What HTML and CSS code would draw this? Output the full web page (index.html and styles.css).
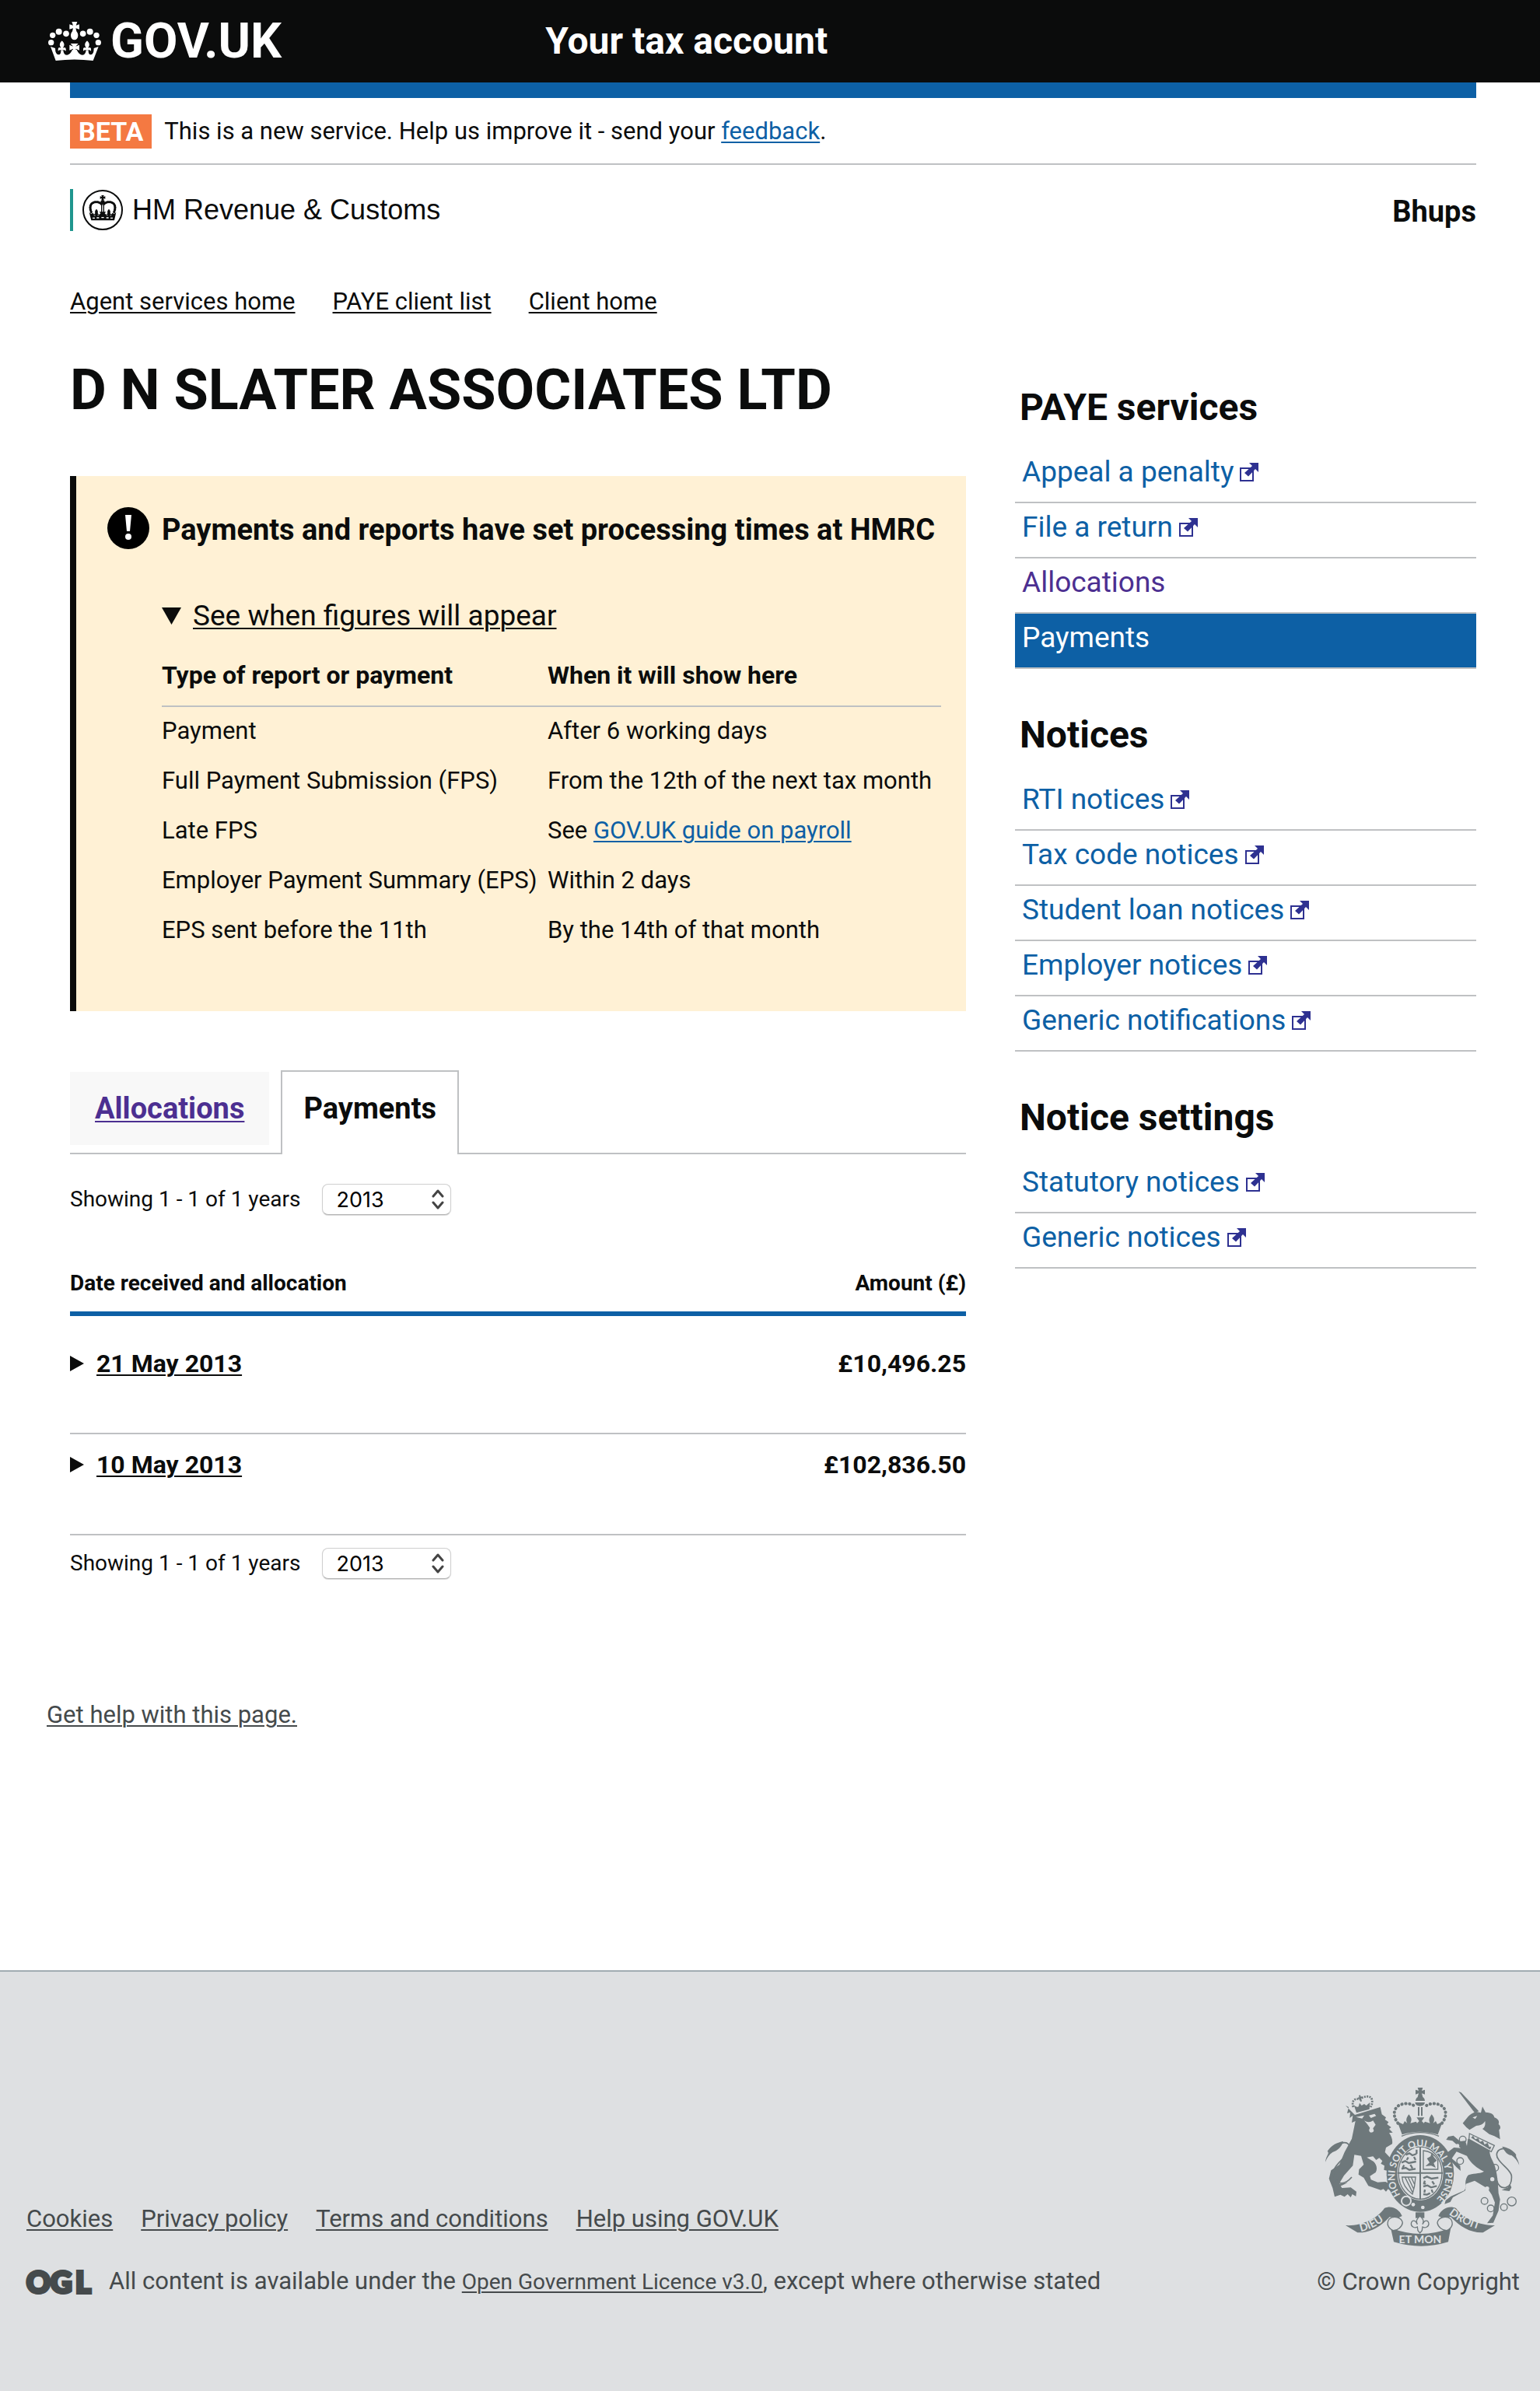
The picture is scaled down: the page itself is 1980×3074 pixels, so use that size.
FILE: index.html
```html
<!DOCTYPE html>
<html lang="en">
<head>
<meta charset="utf-8">
<meta name="viewport" content="width=device-width, initial-scale=1">
<title>D N SLATER ASSOCIATES LTD - Your tax account</title>
<link rel="stylesheet" href="styles.css">
</head>
<body>

<svg class="sprite" aria-hidden="true">
  <symbol id="external" viewBox="0 0 24 24">
    <path d="M1 7h16v16H1z" fill="none" stroke="currentColor" stroke-width="2"/>
    <path d="M12 0h12v12l-4-4-9 9.500-5-4.500L16 4z" fill="currentColor"/>
  </symbol>
  <symbol id="fleur" viewBox="0 0 32 44">
    <path d="M16 0C22 6 26 12 24 19L20 28 26 26Q33 27 31 40Q26 34 16 37Q6 34 1 40Q-1 27 6 26L12 28 8 19C6 12 10 6 16 0z" fill="currentColor"/>
  </symbol>
</svg>

<header class="header">
  <a class="header-logo" href="#">
    <svg class="header-crown" viewBox="33 48 204 150" aria-hidden="true">
      <g fill="currentColor">
        <circle cx="44" cy="128" r="11"/><circle cx="50" cy="100" r="11"/><circle cx="74" cy="86" r="12"/><circle cx="102" cy="94" r="11.500"/>
        <circle cx="226" cy="128" r="11"/><circle cx="219" cy="100" r="11"/><circle cx="194" cy="86" r="12"/><circle cx="167" cy="94" r="11.500"/>
        <path d="M124 48h21l-5 14 13-4v19l-14-4 3 12c4 5 6 9 6 16a14 17 0 0 1-28 0c0-7 2-11 6-16l3-12-14 4V58l14 4z"/>
        <path d="M62 198L42 144 60 150Q60 174 73 175Q83 174 82 158L91 158Q92 176 106 176Q118 174 126 156L143 156Q151 174 163 176Q177 176 179 158L188 158Q187 174 197 175Q209 174 209 150L227 144 206 198Q134 189 62 198z"/>
        <path d="M119 132h30l-10 11 14-6v21l-14-6 2 10h-14l2-10-14 6v-21l14 6z"/>
      </g>
      <use href="#fleur" x="70" y="121" width="32" height="44"/>
      <use href="#fleur" x="167" y="121" width="32" height="44"/>
    </svg>
    <span>GOV.UK</span>
  </a>
  <a class="header-title" href="#">Your tax account</a>
</header>

<div class="container">
  <div class="blue-bar"></div>

  <div class="phase-banner">
    <strong class="phase-tag">BETA</strong>
    <span>This is a new service. Help us improve it - send your <a class="link" href="#">feedback</a>.</span>
  </div>

  <div class="organisation">
    <div class="organisation-logo">
      <svg class="organisation-crest" viewBox="78 39 156 156" aria-hidden="true">
        <circle cx="156" cy="117" r="75" fill="none" stroke="#0b0c0c" stroke-width="6"/>
        <g fill="none" stroke="#0b0c0c" stroke-linecap="round">
          <path d="M112 125c-8-18-4-34 12-38 12-3 22 1 28 8M200 125c8-18 4-34-12-38-12-3-22 1-28 8" stroke-width="9" stroke-dasharray="3 5"/>
          <path d="M113 122c-7-17-3-30 11-34 12-3 22 1 28 9M199 122c7-17 3-30-11-34-12-3-22 1-28 9" stroke-width="4"/>
          <path d="M152 96v34M160 96v34" stroke-width="4"/>
        </g>
        <g fill="#0b0c0c">
          <path d="M151 60h10l-2 6 7-2v10l-7-2 2 6h-10l2-6-7 2V64l7 2z"/>
          <circle cx="156" cy="86" r="8"/>
          <path d="M104 126l8 6 6-4 5 6 4-4c-2-8 0-12 5-17 5 5 7 9 5 17l5 5 6-5-5-6h26l-5 6 6 5 5-5c-2-8 0-12 5-17 5 5 7 9 5 17l4 4 5-6 6 4 8-6-7 31H112z"/>
        </g>
        <path d="M117 148h9m7-1h9m9-1h10m9 1h9m7 1h9" stroke="#fff" stroke-width="4"/>
        <path d="M122 138h6m8-1h6m28 0h6m8 1h6" stroke="#fff" stroke-width="2"/>
      </svg>
      <span>HM Revenue &amp; Customs</span>
    </div>
    <strong class="user-name">Bhups</strong>
  </div>

  <nav class="breadcrumb" aria-label="Breadcrumb">
    <a href="#">Agent services home</a>
    <a href="#">PAYE client list</a>
    <a href="#">Client home</a>
  </nav>

  <div class="columns">
    <main>
      <h1>D N SLATER ASSOCIATES LTD</h1>

      <section class="notice">
        <div class="notice-heading">
          <svg class="notice-icon" viewBox="0 0 54 54" aria-hidden="true">
            <circle cx="27" cy="27" r="27" fill="#000"/>
            <path d="M23 10h8l-2 21h-4z" fill="#fff"/><circle cx="27" cy="38" r="4" fill="#fff"/>
          </svg>
          <h2>Payments and reports have set processing times at HMRC</h2>
        </div>
        <details class="figures" open>
          <summary><span>See when figures will appear</span></summary>
          <table class="figures-table">
            <thead>
              <tr><th scope="col">Type of report or payment</th><th scope="col">When it will show here</th></tr>
            </thead>
            <tbody>
              <tr><td>Payment</td><td>After 6 working days</td></tr>
              <tr><td>Full Payment Submission (FPS)</td><td>From the 12th of the next tax month</td></tr>
              <tr><td>Late FPS</td><td>See <a class="link" href="#">GOV.UK guide on payroll</a></td></tr>
              <tr><td>Employer Payment Summary (EPS)</td><td>Within 2 days</td></tr>
              <tr><td>EPS sent before the 11th</td><td>By the 14th of that month</td></tr>
            </tbody>
          </table>
        </details>
      </section>

      <nav class="tabs" aria-label="Account views">
        <a class="tab" href="#">Allocations</a>
        <a class="tab tab-selected" href="#" aria-current="page">Payments</a>
      </nav>

      <div class="year-filter year-filter-top">
        <label for="year-top">Showing 1 - 1 of 1 years</label>
        <select id="year-top"><option>2013</option></select>
      </div>

      <table class="payments">
        <thead>
          <tr><th scope="col">Date received and allocation</th><th scope="col" class="amount">Amount (£)</th></tr>
        </thead>
        <tbody>
          <tr>
            <td><details><summary><span>21 May 2013</span></summary></details></td>
            <td class="amount">£10,496.25</td>
          </tr>
          <tr>
            <td><details><summary><span>10 May 2013</span></summary></details></td>
            <td class="amount">£102,836.50</td>
          </tr>
        </tbody>
      </table>

      <div class="year-filter">
        <label for="year-bottom">Showing 1 - 1 of 1 years</label>
        <select id="year-bottom"><option>2013</option></select>
      </div>
    </main>

    <aside class="sidebar">
      <section>
        <h2>PAYE services</h2>
        <ul>
          <li><a href="#">Appeal a penalty<svg class="external"><use href="#external"/></svg></a></li>
          <li><a href="#">File a return<svg class="external"><use href="#external"/></svg></a></li>
          <li><a class="visited" href="#">Allocations</a></li>
          <li class="current"><a href="#" aria-current="page">Payments</a></li>
        </ul>
      </section>
      <section>
        <h2>Notices</h2>
        <ul>
          <li><a href="#">RTI notices<svg class="external"><use href="#external"/></svg></a></li>
          <li><a href="#">Tax code notices<svg class="external"><use href="#external"/></svg></a></li>
          <li><a href="#">Student loan notices<svg class="external"><use href="#external"/></svg></a></li>
          <li><a href="#">Employer notices<svg class="external"><use href="#external"/></svg></a></li>
          <li><a href="#">Generic notifications<svg class="external"><use href="#external"/></svg></a></li>
        </ul>
      </section>
      <section>
        <h2>Notice settings</h2>
        <ul>
          <li><a href="#">Statutory notices<svg class="external"><use href="#external"/></svg></a></li>
          <li><a href="#">Generic notices<svg class="external"><use href="#external"/></svg></a></li>
        </ul>
      </section>
    </aside>
  </div>
</div>

<div class="help"><a href="#">Get help with this page.</a></div>

<footer class="footer">
  <div class="footer-main">
    <nav class="footer-links" aria-label="Footer">
      <a href="#">Cookies</a>
      <a href="#">Privacy policy</a>
      <a href="#">Terms and conditions</a>
      <a href="#">Help using GOV.UK</a>
    </nav>
    <div class="licence">
      <svg class="ogl" viewBox="0 0 86 34" aria-hidden="true"><text x="0 31 63" y="31">OGL</text></svg>
      <span>All content is available under the <a href="#">Open Government Licence v3.0</a>, except where otherwise stated</span>
    </div>
  </div>
  <div class="copyright">
    <svg class="arms" viewBox="72 75 750 615" aria-hidden="true">
      <defs>
        <path id="garter-line" d="M362 488A98 114 0 1 1 494 510"/>
        <path id="dieu-line" d="M208 630Q264 620 322 570"/>
        <path id="droit-line" d="M548 562Q606 610 690 628"/>
      </defs>
      <!-- lion -->
      <g fill="#6e787b">
        <path d="M186 180l98-30 6 28 16 12-4 8 14 10-6 8 16 12-8 6 14 14-14 2c10 14 14 26 12 42l-24 14-4 18 28 30c12 18 20 40 22 58l-10 6-10-8-6 12-10-10-8 4 4-20-14-4 2-16-14-8 6-10-12-12-12 8-12-14-24 4 26 16c12 12 16 28 8 42l-22 14 4 14 26 10 30-2 24 12 8 16-12 8-10-8-8 10-10-10-10 4-48-16-18-32-20-12 2-20 18-18-10-34-26-4-6 42-34 38-18 30 10 18 34-2 22 16-2 18-14-8-6 12-12-12-12 10-16-8-22 8-8-34-14-36 8-32 32-22 20-48 28-52 14-68-14 6 4-28-12 10 2-22-12 4 6-24-12-6z"/>
        <path d="M72 362c2-24 18-34 8-42 16-24 38-34 62-38-8 22-22 36-42 42-12 8-22 22-28 38z"/>
        <path d="M88 432l20 10 8-12 10 16 32-4-22 10-30 8-2-12z"/>
      </g>
      <path d="M128 292c30-14 46 6 34 30-14 26-48 44-56 70-6 20 0 40 20 50 18 6 34-6 48-22" fill="none" stroke="#6e787b" stroke-width="5"/>
      <path d="M190 188l24 6 8-12zM240 182l22-6 6 8-20 8zM222 202q18 12 34 0l10 16-10 14q8 16-8 16-12-4-4-18l-10-14z" fill="#dee0e2"/>
      <path d="M192 172l-10-30c6 6 12 10 18 6l4-14 8 10 10-6 8 6 14-12-2 26z" fill="#6e787b"/>
      <path d="M180 150c-8-22 4-36 24-30 20-14 44-16 48 2 2 10 0 20-6 28" fill="none" stroke="#6e787b" stroke-width="8" stroke-dasharray="6 4"/>
      <path d="M204 104l6 24M198 116l18-4" stroke="#6e787b" stroke-width="6"/>
      <!-- unicorn -->
      <g fill="#6e787b">
        <path d="M586 90l10 4 68 72-16 6z"/>
        <path d="M602 212c14-14 22-36 52-44l18 4 6-24 12 22c24 2 32 8 34 20 16 6 20 16 16 26 10 8 8 18 2 22l4 36-22-12-20-8-26-20c10-6 12-18 10-30-8 14-18 16-34 18l-26 16-12-10z"/>
        <path d="M622 272l84 44c-2 24 14 42 20 62 12 40 12 76 14 104l6 24-6 44-20 46-24 2 22-30 8-50-12-30-16-24-50-30-34 12-2 26-48 26-10 18-22 8 4-14 20-16 52-22 6-12c-4-20 0-38 10-48 24-8 50-6 60-14-26-12-52-32-66-60l-40-16-18 26 32 28 2 20-16-14-22-24-12-34 24-18 26 2-32-28-24-4 8-12 20-4 26 22 20-2 6 20z"/>
        <path d="M820 374c-4-24-16-32-12-40-12-20-34-28-54-32 10 20 20 32 36 34 14 10 22 20 30 38z"/>
      </g>
      <path d="M764 310c-34 0-36 26-24 42 14 22 46 40 50 62 2 24-6 42-22 46-18 4-30-8-34-26" fill="none" stroke="#6e787b" stroke-width="5"/>
      <path d="M752 470l24-10 8-14 6 14-8 14z" fill="#6e787b"/>
      <path d="M628 252l96 46-12 24-86-48z" fill="#dee0e2" stroke="#6e787b" stroke-width="4"/>
      <path d="M634 268l8-8 8 14 12-4 6 14 12-4 6 14 12-6 6 16 8-2-4 12z" fill="#6e787b"/>
      <path d="M640 190l18-6-8 12z" fill="#dee0e2"/>
      <g fill="none" stroke="#6e787b" stroke-width="4">
        <circle cx="602" cy="275" r="13"/><circle cx="592" cy="358" r="13"/><circle cx="727" cy="384" r="13"/>
        <circle cx="686" cy="512" r="13"/><circle cx="710" cy="541" r="13"/><circle cx="761" cy="536" r="13"/><circle cx="791" cy="514" r="17"/>
      </g>
      <g fill="#dee0e2"><circle cx="716" cy="428" r="8"/><circle cx="696" cy="464" r="8"/><circle cx="582" cy="299" r="7"/></g>
      <!-- royal crown -->
      <g fill="#6e787b">
        <path d="M428 75h20l-4 12 12-4v18l-12-4 4 14h-20l4-14-12 4V83l12 4z"/>
        <path d="M420 126a18 18 0 0 1 36 0zM418 132h38q-2 14-19 14t-19-14z"/>
        <path d="M350 206l22 10 6-12 10 8c-6-12-4-20 6-34 12 14 12 22 6 34l22-6 4 6 8-8-10-14h30l-10 14 8 8 4-6 20 6c-6-12-4-20 6-34 12 14 12 22 6 34l10-8 6 12 20-10-18 50c-50-14-92-14-138 0z"/>
      </g>
      <path d="M432 150v34M444 150v34" stroke="#6e787b" stroke-width="6"/>
      <path d="M352 212c-22-28-18-62 12-72 22-8 48-2 58 12M522 212c22-28 18-62-12-72-22-8-46-2-56 12" fill="none" stroke="#6e787b" stroke-width="12" stroke-linecap="round" stroke-dasharray="1 14"/>
      <path d="M366 262q72-28 144 0" fill="none" stroke="#6e787b" stroke-width="4"/>
      <!-- garter and shield -->
      <ellipse cx="438" cy="406" rx="130" ry="148" fill="#6e787b"/>
      <ellipse cx="438" cy="404" rx="89" ry="106" fill="#dee0e2"/>
      <ellipse cx="438" cy="404" rx="84" ry="101" fill="none" stroke="#6e787b" stroke-width="4"/>
      <path d="M438 300v208M350 404h176" stroke="#6e787b" stroke-width="6"/>
      <g fill="none" stroke="#6e787b" stroke-width="7">
        <path d="M382 334l14-6 12 8 16-6M392 344l-6 10M414 342l6 12M366 364l14-6 14 8 28-6M376 374l-6 10M400 372l8 14M366 388l16-4 14 8 24-4M424 314v16"/>
        <path d="M450 424l14-6 18 8 26-4M456 434l-4 12M484 436l8 12M450 456l16-4 14 8 22-6M456 468l-2 12M482 468l4 12M450 486l14 2 12-6M450 444l10 2"/>
      </g>
      <path d="M450 318q36 2 56 36v36h-56z" fill="none" stroke="#6e787b" stroke-width="4"/>
      <path d="M458 378l16-14-10-16 14-8 4-14 8 16 12 14-12 10 8 18-18-8z" fill="#6e787b"/>
      <path d="M368 420h52q-2 36-12 66c-18-14-38-34-40-66zM380 422l28 56M392 422l20 42M404 422l12 26" fill="none" stroke="#6e787b" stroke-width="4"/>
      <text class="garter-motto"><textPath href="#garter-line">HONI SOIT QUI MAL Y PENSE</textPath></text>
      <circle cx="384" cy="512" r="18" fill="#6e787b" stroke="#dee0e2" stroke-width="6"/>
      <circle cx="411" cy="526" r="7" fill="#dee0e2"/><circle cx="448" cy="537" r="7" fill="#dee0e2"/>
      <!-- motto scroll -->
      <g fill="#6e787b">
        <path d="M150 606c60 4 120-24 150-66 24-12 56 0 68 30l-20 10-28-6c-36 38-76 62-124 60z"/>
        <path d="M726 606c-60 0-120-24-150-66-24-12-56 0-68 30l20 10 28-6c36 38 76 62 124 60z"/>
        <path d="M324 616q116 46 232 0l-10 54q-104 32-210 0z"/>
        <path d="M420 556h34v22h-34z"/>
      </g>
      <g fill="#dee0e2" stroke="#6e787b" stroke-width="4">
        <path d="M318 582c18-14 48-8 52 14-2 16-20 30-36 30-20-8-28-26-16-44zM556 582c-18-14-48-8-52 14 2 16 20 30 36 30 20-8 28-26 16-44z"/>
        <path d="M437 570c14 12 16 20 10 32 8-18 22-18 24-2 0 12-14 18-24 12l-2 14-8 10-8-10-2-14c-10 6-24 0-24-12 2-16 16-16 24 2-6-12-4-20 10-32z"/>
      </g>
      <g class="scroll-motto">
        <text><textPath href="#dieu-line">DIEU</textPath></text>
        <text x="438" y="675" text-anchor="middle">ET MON</text>
        <text><textPath href="#droit-line">DROIT</textPath></text>
      </g>
    </svg>
    <span>© Crown Copyright</span>
  </div>
</footer>

</body>
</html>
```
FILE: styles.css
```css
* {
  box-sizing: border-box;
}

body {
  margin: 0;
  background: #fff;
  color: #0b0c0c;
  font: 31px/40px Roboto, "Liberation Sans", sans-serif;
}

h1, h2, ul, table {
  margin: 0;
  padding: 0;
}

a {
  color: inherit;
  text-decoration-thickness: 2px;
  text-underline-offset: 3px;
}

.sprite {
  display: block;
  width: 0;
  height: 0;
}

.link {
  color: #0d60a5;
}

/* Header */
.header {
  display: grid;
  grid-template-columns: 1fr 2fr;
  align-items: center;
  height: 106px;
  padding-left: 62px;
  background: #0b0c0c;
  color: #fff;
  font-weight: 700;
}

.header a {
  text-decoration: none;
}

.header-logo {
  display: flex;
  align-items: center;
  gap: 12px;
  font-size: 63px;
}

.header-crown {
  width: 68px;
  height: 50px;
}

.header-title {
  font-size: 48px;
}

.container {
  padding: 0 82px 0 90px;
}

.blue-bar {
  height: 20px;
  background: #0d60a5;
}

.phase-banner {
  display: flex;
  align-items: center;
  gap: 16px;
  padding: 21px 0 19px;
  border-bottom: 2px solid #bfc1c3;
}

.phase-tag {
  padding: 0 11px;
  background: #f47942;
  color: #fff;
  font-size: 34px;
  line-height: 44px;
}

.organisation {
  display: flex;
  justify-content: space-between;
  align-items: flex-end;
  margin-top: 31px;
}

.organisation-logo {
  display: flex;
  align-items: center;
  gap: 12px;
  height: 54px;
  padding-left: 12px;
  border-left: 4px solid #1f968e;
  font-family: "Liberation Sans", Arial, sans-serif;
  font-size: 36px;
}

.organisation-crest {
  width: 52px;
  height: 52px;
}

.user-name {
  font-size: 38px;
  line-height: 50px;
}

.breadcrumb {
  display: flex;
  gap: 48px;
  margin: 71px 0 54px;
}

.columns {
  display: grid;
  grid-template-columns: minmax(0, 1152fr) minmax(0, 593fr);
  gap: 63px;
  align-items: start;
}

h1 {
  margin-bottom: 70px;
  font-size: 72px;
  line-height: 80px;
}

/* Processing times notice */
.notice {
  padding: 40px 32px 71px 40px;
  border-left: 8px solid #0b0c0c;
  background: #fff1d5;
}

.notice-heading {
  display: flex;
  gap: 16px;
}

.notice-icon {
  flex: none;
  width: 54px;
  height: 54px;
}

.notice h2 {
  font-size: 38px;
  line-height: 58px;
}

summary {
  display: flex;
  align-items: center;
  list-style: none;
  cursor: pointer;
}

summary::before {
  content: "";
  background: currentColor;
}

summary span {
  text-decoration: underline;
  text-decoration-thickness: 2px;
  text-underline-offset: 3px;
}

.figures {
  margin: 60px 0 0 70px;
}

.figures summary {
  gap: 15px;
  font-size: 37px;
  line-height: 44px;
}

.figures summary::before {
  width: 25px;
  height: 22px;
  clip-path: polygon(0 0, 100% 0, 50% 100%);
}

table {
  width: 100%;
  border-spacing: 0;
}

th {
  text-align: left;
}

.figures-table td {
  padding: 11px 0 13px;
}

.figures-table th {
  padding: 34px 0 19px;
  border-bottom: 2px solid #bfc1c3;
  font-size: 32px;
}

.figures-table th:first-child {
  width: 496px;
}

/* Tabs */
.tabs {
  display: flex;
  align-items: flex-start;
  gap: 15px;
  margin-top: 76px;
  border-bottom: 2px solid #bfc1c3;
  font-size: 38px;
  font-weight: 700;
  line-height: 94px;
}

.tab {
  margin-top: 2px;
  padding: 0 32px;
  background: #f8f8f8;
  color: #4c2f91;
}

.tab-selected {
  margin: 0 0 -2px;
  padding: 0 27px 12px;
  border: 2px solid #bfc1c3;
  border-bottom: 0;
  background: #fff;
  color: #0b0c0c;
  text-decoration: none;
}

.year-filter {
  display: flex;
  align-items: center;
  gap: 28px;
  margin-top: 16px;
  font-size: 28px;
}

.year-filter-top {
  margin-top: 38px;
}

select {
  width: 166px;
  height: 40px;
  padding: 0 17px;
  appearance: none;
  border: 1px solid #cfcfcf;
  border-bottom-color: #b4b4b4;
  border-radius: 8px;
  background: #fff url("data:image/svg+xml,%3Csvg xmlns='http://www.w3.org/2000/svg' width='16' height='26' fill='none' stroke='%23444' stroke-width='3' stroke-linecap='round' stroke-linejoin='round'%3E%3Cpath d='M2 9l6-7 6 7M2 17l6 7 6-7'/%3E%3C/svg%3E") no-repeat right 8px center;
  box-shadow: 0 1px 1px rgba(0, 0, 0, .15);
  color: #000;
  font: 27px Inter, "Liberation Sans", sans-serif;
}

/* Payments table */
.payments {
  margin-top: 70px;
  font-size: 32px;
  font-weight: 700;
}

.payments th {
  padding: 0 0 18px;
  border-bottom: 6px solid #0d60a5;
  font-size: 28px;
  line-height: 36px;
}

.payments td {
  padding: 19px 0 69px;
  border-bottom: 2px solid #bfc1c3;
}

.payments tbody tr:first-child td {
  padding-top: 41px;
}

.payments .amount {
  text-align: right;
}

.payments summary {
  gap: 16px;
}

.payments summary::before {
  width: 18px;
  height: 20px;
  clip-path: polygon(0 0, 100% 50%, 0 100%);
}

/* Sidebar */
.sidebar {
  display: grid;
  gap: 57px;
  padding-top: 34px;
}

.sidebar h2 {
  margin-bottom: 24px;
  padding-left: 6px;
  font-size: 48px;
  line-height: 56px;
}

.sidebar ul {
  list-style: none;
}

.sidebar li {
  padding: 9px 9px 16px;
  border-bottom: 2px solid #bfc1c3;
  color: #0d60a5;
  font-size: 37px;
  line-height: 44px;
}

.sidebar a {
  text-decoration: none;
}

.sidebar .visited {
  color: #4c2f91;
}

.sidebar .current {
  background: #0d60a5;
  color: #fff;
}

.external {
  width: 24px;
  height: 24px;
  margin-left: 8px;
  color: #2e3191;
}

.help {
  margin-top: 155px;
  padding-left: 60px;
  color: #454a4c;
}

/* Footer */
.footer {
  display: flex;
  justify-content: space-between;
  align-items: flex-end;
  margin-top: 308px;
  padding: 149px 26px 120px 34px;
  border-top: 2px solid #a1acb2;
  background: #dee0e2;
  color: #454a4c;
}

.footer-links {
  display: flex;
  gap: 36px;
  margin-bottom: 40px;
}

.licence {
  display: flex;
  align-items: center;
  gap: 20px;
}

.licence a {
  font-size: 28px;
}

.ogl {
  width: 86px;
  height: 34px;
  overflow: visible;
  fill: #454a4c;
  stroke: #454a4c;
  stroke-width: 4px;
  font: 900 38px Lato, sans-serif;
}

.copyright {
  display: flex;
  flex-direction: column;
  align-items: flex-end;
  gap: 25px;
}

.arms {
  width: 250px;
  height: 205px;
}

.garter-motto,
.scroll-motto {
  fill: #dee0e2;
  font-family: Lato, sans-serif;
  font-weight: 700;
}

.garter-motto {
  font-size: 37px;
}

.scroll-motto {
  font-size: 42px;
}
```
